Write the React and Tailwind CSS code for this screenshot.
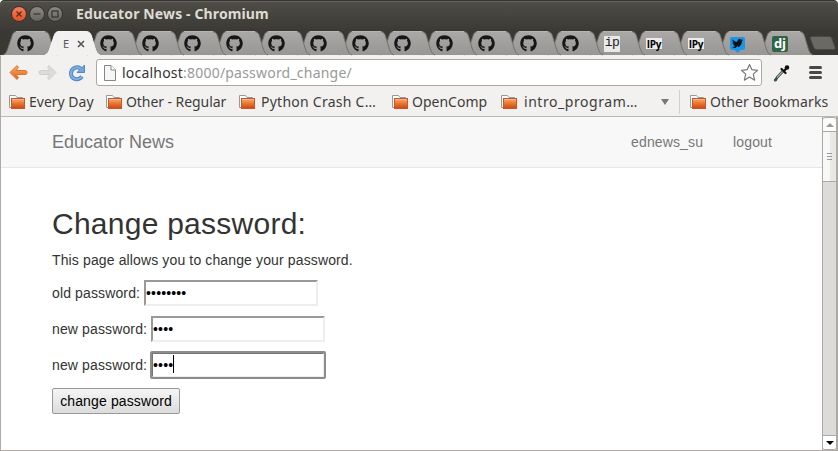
import React from "react";
import { FaGithub, FaTwitter } from "react-icons/fa";

const TABS = [
  "gh", "active", "gh", "gh", "gh", "gh", "gh", "gh", "gh", "gh",
  "gh", "gh", "gh", "gh", "ip", "ipy", "ipy", "tw", "dj",
];

const UI = "font-['Noto_Sans',sans-serif]";

function Favicon({ kind }) {
  if (kind === "gh") return <FaGithub className="size-[17px] text-[#161616]" />;
  if (kind === "ip")
    return (
      <span className="flex size-4 items-center justify-center bg-[#e9e9e9] pb-[2px] font-['Liberation_Mono',monospace] text-[13px] leading-none tracking-[-0.5px] text-[#222]">
        ip
      </span>
    );
  if (kind === "ipy")
    return (
      <span className="flex h-[11px] w-4 items-center justify-center bg-[#ececec] font-['Open_Sans',sans-serif] text-[10px] font-bold leading-none tracking-[-0.3px] text-black">
        IPy
      </span>
    );
  if (kind === "tw")
    return (
      <span className="relative flex h-[13px] w-[15px] items-center justify-center rounded-[2px] bg-[#1b95e8]">
        <FaTwitter className="size-[11px] text-[#101418]" />
        <span className="absolute -bottom-[2px] left-[5px] size-[5px] rotate-45 bg-[#1b95e8]" />
      </span>
    );
  return (
    <span className="flex size-4 items-center justify-center rounded-[2px] bg-[#2f6447] pb-[1px] font-['Open_Sans',sans-serif] text-[13px] font-bold leading-none tracking-[-0.3px] text-white">
      dj
    </span>
  );
}

function Tab({ kind, index }) {
  const active = kind === "active";
  return (
    <div
      className="relative h-6 w-[41.94px] shrink-0"
      style={{ zIndex: active ? 40 : 30 - index }}
    >
      <svg className="absolute left-0 top-0 h-6 w-[56px] overflow-visible" viewBox="0 0 56 24">
        <path
          d="M0 24C3 23 4 20 5 17L9 5C10 2 11 .5 14 .5H41C44 .5 45.500 2 46.500 5L50 17C51 20 52 23 55 24Z"
          fill={active ? "#f2f1f0" : "url(#tabfill)"}
        />
        <path
          d="M0 24C3 23 4 20 5 17L9 5C10 2 11 .5 14 .5H41C44 .5 45.500 2 46.500 5L50 17C51 20 52 23 55 24"
          fill="none"
          stroke={active ? "#f5f4f2" : "#74726e"}
          strokeWidth="1"
        />
        {!active && <path d="M13 .5H42" stroke="#b6b5b3" />}
      </svg>
      <div className="relative flex h-[25px] w-[44px] items-center justify-center">
        {active ? (
          <span className="flex w-full items-center gap-[7px] pl-[18px]">
            <span className={`${UI} w-[7px] text-[11px] leading-4 text-[#555]`}>E</span>
            <svg className="size-[8px] shrink-0" viewBox="0 0 8 8">
              <path d="M1 1L7 7M7 1L1 7" stroke="#555" strokeWidth="1.600" />
            </svg>
          </span>
        ) : (
          <Favicon kind={kind} />
        )}
      </div>
    </div>
  );
}

function Folder() {
  return (
    <svg className="size-4 shrink-0" viewBox="0 0 16 16">
      <path d="M.5 13.500V1.500H6.500L8 3.500H13.500V6" fill="#fff" stroke="#999" />
      <path d="M.5 13.500H3" stroke="#999" />
      <rect x="2.500" y="4.500" width="13" height="10" fill="url(#folder)" stroke="#c7562a" />
      <path d="M3 5.500H15" stroke="#f3b48a" />
    </svg>
  );
}

function Bookmark({ label, width, tracking = "" }) {
  return (
    <div className={`flex shrink-0 items-center gap-1 ${width}`}>
      <Folder />
      <span className={`whitespace-pre ${tracking}`}>{label}</span>
    </div>
  );
}

function WindowButton({ close, children }) {
  return (
    <svg className="size-4" viewBox="0 0 16 16">
      <circle cx="8" cy="8" r="7.500" fill={close ? "url(#close)" : "url(#winbtn)"} stroke="#33312d" />
      <g fill="none" stroke={close ? "#5b2413" : "#35332f"} strokeWidth="1.200">{children}</g>
    </svg>
  );
}

function Field({ label, dots, focused }) {
  return (
    <div className="mb-[10px] flex h-[26px] items-center gap-[4px]">
      <span className="leading-5">{label}</span>
      <div
        className={
          "flex h-[26px] w-[174px] items-center border-2 bg-white text-black " +
          (focused
            ? "rounded-[1px] border-b-[#eee] border-l-[#767676] border-r-[#eee] border-t-[#767676] outline-2 -outline-offset-1 outline-[#8c8c8c]"
            : "border-b-[#eee] border-l-[#999] border-r-[#eee] border-t-[#999]")
        }
      >
        <span className="leading-5">{dots}</span>
        {focused && <span className="mb-[2px] h-[18px] w-px bg-black" />}
      </div>
    </div>
  );
}

export default function App() {
  return (
    <div className="flex h-[451px] w-[838px] flex-col overflow-hidden bg-[#f2f1f0]">
      <svg className="absolute size-0">
        <defs>
          <linearGradient id="tabfill" x2="0" y2="1">
            <stop stopColor="#aaa9a7" />
            <stop offset="1" stopColor="#979694" />
          </linearGradient>
          <linearGradient id="folder" x2="0" y2="1">
            <stop stopColor="#f2b27c" />
            <stop offset=".5" stopColor="#e8762f" />
            <stop offset="1" stopColor="#cf4411" />
          </linearGradient>
          <linearGradient id="close" x2="0" y2="1">
            <stop stopColor="#f58060" />
            <stop offset="1" stopColor="#e1501f" />
          </linearGradient>
          <linearGradient id="winbtn" x2="0" y2="1">
            <stop stopColor="#8b8982" />
            <stop offset="1" stopColor="#66645e" />
          </linearGradient>
          <linearGradient id="back" x2="0" y2="1">
            <stop stopColor="#f6ad66" />
            <stop offset="1" stopColor="#e2621b" />
          </linearGradient>
        </defs>
      </svg>

      <div className="flex h-[55px] shrink-0 flex-col rounded-t-[5px] bg-linear-to-b from-[#504e48] to-[#3a3833] to-60% shadow-[inset_0_1px_0_#363430,inset_0_2px_0_#66645d]">
        <div className="flex h-[31px] items-center pl-[11px] pb-[3px]">
          <div className="flex gap-[2px]">
            <WindowButton close><path d="M5.500 5.500L10.500 10.500M10.500 5.500L5.500 10.500" /></WindowButton>
            <WindowButton><path d="M4.500 8H11.500" /></WindowButton>
            <WindowButton><rect x="5" y="5" width="6" height="6" /></WindowButton>
          </div>
          <span className={`${UI} ml-[13px] whitespace-pre text-[14px] font-bold leading-5 tracking-[0.13px] text-[#dfdbd2]`}>
            Educator News - Chromium
          </span>
        </div>
        <div className="flex h-6 pl-[3px]">
          {TABS.map((kind, i) => (
            <Tab key={i} kind={kind} index={i} />
          ))}
          <svg className="ml-[9px] mt-[4px] h-[16px] w-[27px] shrink-0" viewBox="0 0 27 16">
            <path d="M3 1.500H20C22 1.500 22.500 2.500 23 4L26 12C26.500 14 26 14.500 24 14.500H8C6 14.500 5 13.500 4.500 12L1.500 4C1 2.500 1 1.500 3 1.500Z" fill="#6b6965" stroke="#4c4a46" />
          </svg>
        </div>
      </div>

      <div className="flex h-[34px] shrink-0 items-center border-l border-t border-[#aeaaa4] border-t-[#f2f1f0] pl-[8px]">
        <svg className="h-[17px] w-[19px]" viewBox="0 0 19 17">
          <path d="M8 1.500L1 8.500L8 15.500L9.500 13.500L7 10.500H16.500C18.500 10.500 18.500 6.500 16.500 6.500H7L9.500 3.500Z" fill="url(#back)" stroke="#dc7431" strokeLinejoin="round" />
        </svg>
        <svg className="ml-[10px] h-[17px] w-[19px]" viewBox="0 0 19 17">
          <path d="M11 1.500L18 8.500L11 15.500L9.500 13.500L12 10.500H2.500C.5 10.500 .5 6.500 2.500 6.500H12L9.500 3.500Z" fill="#dedcda" stroke="#d0cecb" strokeLinejoin="round" />
        </svg>
        <svg className="ml-[11px] h-[18px] w-[18px]" viewBox="0 0 18 18">
          <path d="M13 5C9.500 1.500 3 4 3 9.500C3 15.500 10.500 17 14 12.500" fill="none" stroke="#5089c4" strokeWidth="4" />
          <path d="M16.500 1V8.500H9Z" fill="#6ea5da" stroke="#5089c4" strokeLinejoin="round" />
          <path d="M13 5C9.500 1.500 3 4 3 9.500C3 15.500 10.500 17 14 12.500" fill="none" stroke="#7fb0e0" strokeWidth="2" />
        </svg>
        <div className="ml-[10px] flex h-[27px] w-[666px] items-center rounded-[3px] border border-[#aaa8a5] bg-white pl-[7px] pr-[2px]">
          <svg className="h-4 w-[12px]" viewBox="0 0 12 16">
            <path d="M.5 .5H7L11.500 5V15.500H.5Z" fill="#f6f6f6" stroke="#858585" />
            <path d="M7 .5V5H11.500" fill="#fff" stroke="#858585" />
          </svg>
          <span className={`${UI} ml-[6px] whitespace-pre text-[14px] leading-5 tracking-[0.21px] text-[#999]`}>
            <span className="text-[#333]">localhost</span>:8000/password_change/
          </span>
          <svg className="ml-auto size-[19px]" viewBox="0 0 19 19">
            <path d="M9.500 1.500L11.900 6.700L17.600 7.300L13.300 11.100L14.600 17.200L9.500 14L4.400 17.200L5.700 11.100L1.400 7.300L7.100 6.700Z" fill="#fff" stroke="#777" strokeWidth="1.200" strokeLinejoin="round" />
          </svg>
        </div>
        <svg className="ml-[11px] size-[18px]" viewBox="0 0 18 18">
          <path d="M10.500 6.500L4 13.500L2.500 16.500" fill="none" stroke="#444" strokeWidth="2.600" />
          <path d="M10.500 6.500L4 13.500" stroke="#91b99c" strokeWidth="1.200" />
          <path d="M8.500 5L12.500 9M11 7L14.500 3" fill="none" stroke="#111" strokeWidth="2.200" strokeLinecap="round" />
          <circle cx="14" cy="3.500" r="2.300" fill="#111" />
          <circle cx="2.300" cy="16" r="1.500" fill="#275e40" />
        </svg>
        <div className="ml-[18px] flex w-[13px] flex-col gap-[2px]">
          <span className="h-[3px] rounded-full bg-[#484846]" />
          <span className="h-[3px] rounded-full bg-[#484846]" />
          <span className="h-[3px] rounded-full bg-[#484846]" />
        </div>
      </div>

      <div className={`${UI} flex h-[28px] shrink-0 items-center border-b border-l border-b-[#bbb8b4] border-l-[#aeaaa4] pb-[2px] pl-[8px] text-[14px] leading-5 text-[#3e3d3a]`}>
        <Bookmark label="Every Day" width="w-[97px]" />
        <Bookmark label="Other - Regular" width="w-[133px]" tracking="tracking-[-0.07px]" />
        <div className="flex w-[153px] shrink-0 items-center gap-[6px]">
          <Folder />
          <span className="whitespace-pre tracking-[0.25px]">Python Crash C…</span>
        </div>
        <Bookmark label="OpenComp" width="w-[109px]" />
        <div className="flex w-[160px] shrink-0 items-center gap-[7px]">
          <Folder />
          <span className="whitespace-pre tracking-[0.55px]">intro_program…</span>
        </div>
        <span className="h-0 w-0 border-x-4 border-t-[6px] border-x-transparent border-t-[#777]" />
        <span className="ml-[10px] mr-[10px] h-[24px] w-px bg-[#d2cfcc]" />
        <Bookmark label="Other Bookmarks" width="w-[140px]" tracking="tracking-[0.13px]" />
      </div>

      <div className="flex min-h-0 flex-1 border-b border-l border-[#aeaaa4] bg-white font-['Liberation_Sans',sans-serif] text-[14px] tracking-[0.13px] text-[#333]">
        <div className="min-w-0 flex-1">
          <div className="flex h-[51px] items-center border-b border-[#e7e7e7] bg-[#f8f8f8] pl-[51px] pr-[50px] text-[#777]">
            <span className="flex-1 text-[18px] leading-5 tracking-normal">Educator News</span>
            <span className="leading-5">ednews_su</span>
            <span className="ml-[30px] leading-5">logout</span>
          </div>
          <div className="flex flex-col items-start pl-[51px] pt-[39px]">
            <h1 className="text-[30px] leading-[33px] tracking-[0.25px]">Change password:</h1>
            <p className="mb-[10px] mt-[10px] leading-5">This page allows you to change your password.</p>
            <Field label="old password:" dots="••••••••" />
            <Field label="new password:" dots="••••" />
            <Field label="new password:" dots="••••" focused />
            <button className="h-[26px] w-[128px] rounded-[2px] border border-[#999] bg-linear-to-b from-[#f5f5f5] to-[#dcdcdc] leading-5 text-black">
              change password
            </button>
          </div>
        </div>
        <div className="flex w-[15px] flex-col border-x border-[#aaa] bg-[#dcdbda]">
          <div className="flex h-[15px] items-center justify-center rounded-t-[3px] border-b border-t border-[#aaa] bg-[#fbfbfa]">
            <span className="h-0 w-0 border-x-[4px] border-b-4 border-x-transparent border-b-[#999]" />
          </div>
          <div className="flex h-[50px] flex-col items-center justify-center gap-[2px] border-b border-[#aaa] bg-linear-to-r from-[#f8f8f7] from-55% to-[#e9e8e7] to-55%">
            <span className="h-px w-[5px] bg-[#999]" />
            <span className="h-px w-[5px] bg-[#999]" />
            <span className="h-px w-[5px] bg-[#999]" />
          </div>
          <div className="mt-auto flex h-[15px] items-center justify-center rounded-b-[3px] border-b border-t border-[#aaa] bg-white">
            <span className="h-0 w-0 border-x-[4px] border-t-4 border-x-transparent border-t-black" />
          </div>
        </div>
        <div className="w-px bg-[#aeaaa4]" />
      </div>
    </div>
  );
}
